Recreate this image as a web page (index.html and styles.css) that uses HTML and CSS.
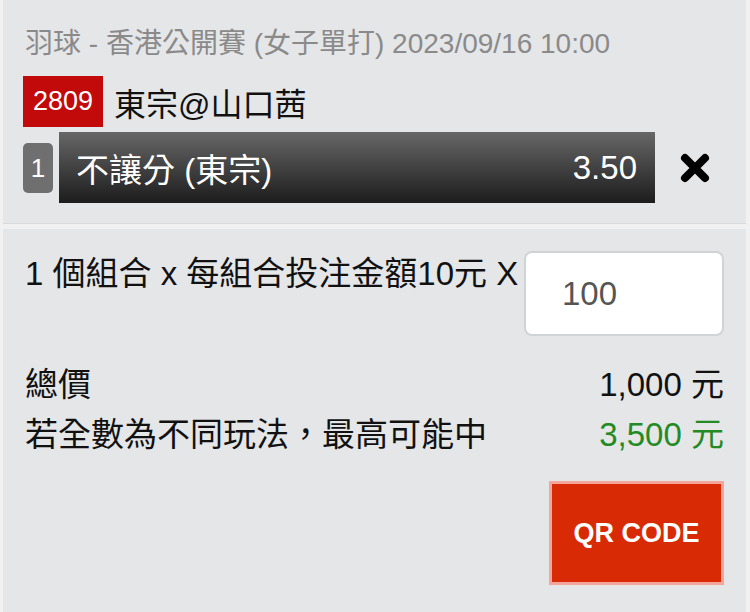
FILE: index.html
```html
<!DOCTYPE html>
<html lang="zh-Hant">
<head>
    <meta charset="UTF-8">
    <meta name="viewport" content="width=device-width, initial-scale=1.0">
    <title>投注單</title>
    <link rel="stylesheet" href="styles.css">
</head>
<body>
    <div class="slip">
        <!-- Selected bet -->
        <div class="panel bet-panel">
            <div class="event-info">羽球 - 香港公開賽 (女子單打) 2023/09/16 10:00</div>
            <div class="match-row">
                <span class="match-no">2809</span>
                <span class="match-name">東宗@山口茜</span>
            </div>
            <div class="pick-row">
                <span class="pick-index">1</span>
                <div class="pick-bar">
                    <span>不讓分 (東宗)</span>
                    <span>3.50</span>
                </div>
                <button type="button" class="remove-button" aria-label="刪除">
                    <svg width="30" height="30" viewBox="0 0 30 30">
                        <path d="M5 5 L25 25 M25 5 L5 25" stroke="#000" stroke-width="8" stroke-linecap="round"/>
                    </svg>
                </button>
            </div>
        </div>
        <!-- Stake and totals -->
        <div class="panel stake-panel">
            <div class="stake-row">
                <label for="units">1 個組合 x 每組合投注金額10元 X</label>
                <input type="text" id="units" value="100">
            </div>
            <div class="total-row">
                <span>總價</span>
                <span>1,000 元</span>
            </div>
            <div class="total-row">
                <span>若全數為不同玩法，最高可能中</span>
                <span class="max-win">3,500 元</span>
            </div>
            <div class="actions">
                <button type="button" class="qr-button">QR CODE</button>
            </div>
        </div>
    </div>
</body>
</html>
```

FILE: styles.css
```css
body {
    margin: 0;
    padding: 0;
    background-color: #f1f1f1;
    font-family: 'Liberation Sans', 'Noto Sans CJK TC', sans-serif;
    color: #111;
}
.slip {
    padding: 0 4px 0 3px;
}
.panel {
    background-color: #e5e6e8;
}
.bet-panel {
    padding: 24px 22px 20px 20px;
    border-bottom: 1px solid #d9dadc;
}
.stake-panel {
    margin-top: 5px;
    padding: 22px 22px 30px 22px;
    min-height: 340px;
}
.event-info {
    font-size: 28px;
    line-height: 40px;
    color: #8a8a8a;
    white-space: nowrap;
    padding-left: 2px;
}
.match-row {
    margin-top: 12px;
    display: flex;
    align-items: center;
    gap: 11px;
}
.match-no {
    height: 51px;
    line-height: 51px;
    padding: 0 10px;
    font-size: 27px;
    color: #fff;
    background-color: #c20a0a;
}
.match-name {
    font-size: 32px;
}
.pick-row {
    margin-top: 5px;
    display: flex;
    align-items: center;
}
.pick-index {
    width: 30px;
    height: 50px;
    line-height: 50px;
    text-align: center;
    font-size: 26px;
    color: #fff;
    background-color: #6f6f6f;
    border-radius: 5px;
}
.pick-bar {
    margin-left: 6px;
    width: 596px;
    height: 71px;
    box-sizing: border-box;
    padding: 0 18px 0 17px;
    display: flex;
    justify-content: space-between;
    align-items: center;
    font-size: 33px;
    color: #fff;
    background: linear-gradient(#676767, #1c1c1c);
}
.remove-button {
    margin-left: 25px;
    padding: 0;
    border: none;
    background: none;
    display: flex;
    cursor: pointer;
}
.stake-row {
    display: flex;
    align-items: flex-start;
    justify-content: space-between;
}
.stake-row label {
    font-size: 33px;
    line-height: 40px;
    padding-top: 3px;
    white-space: nowrap;
}
.stake-row input {
    width: 200px;
    height: 85px;
    box-sizing: border-box;
    padding: 0 0 0 36px;
    font-family: 'Liberation Sans', sans-serif;
    font-size: 33px;
    color: #555;
    background-color: #fff;
    border: 2px solid #d0d4d7;
    border-radius: 8px;
    outline: none;
}
.total-row {
    display: flex;
    justify-content: space-between;
    font-size: 33px;
    line-height: 50px;
}
.stake-row + .total-row {
    margin-top: 24px;
}
.max-win {
    color: #248a24;
}
.actions {
    margin-top: 21px;
    display: flex;
    justify-content: flex-end;
}
.qr-button {
    width: 175px;
    height: 104px;
    font-family: 'Liberation Sans', sans-serif;
    font-size: 27px;
    font-weight: bold;
    color: #fff;
    background-color: #d92a06;
    border: 3px solid #f4a59c;
    cursor: pointer;
}
```
